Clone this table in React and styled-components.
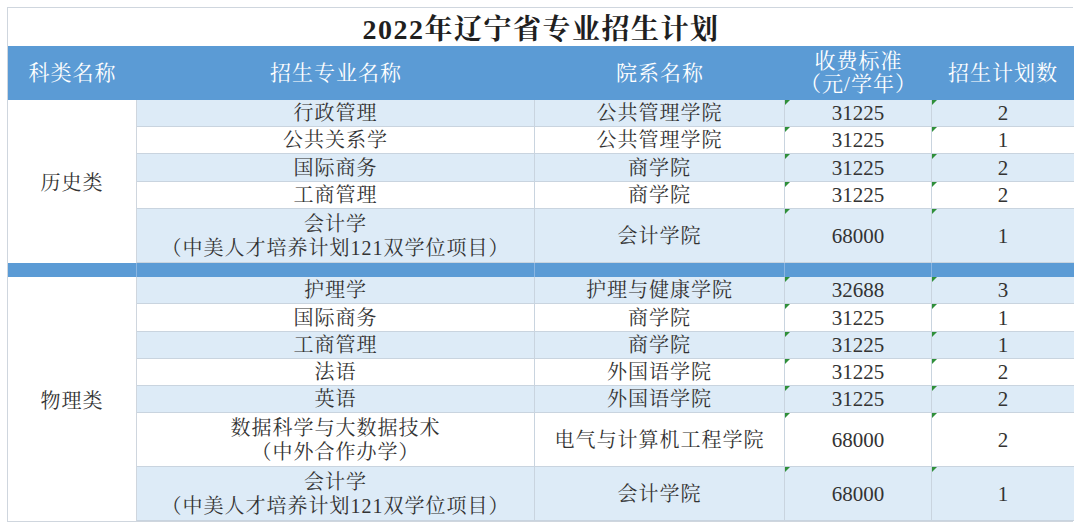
import React from "react";
import styled, { createGlobalStyle } from "styled-components";

const GlobalStyle = createGlobalStyle`
  html, body { margin: 0; padding: 0; background: #ffffff; }
  body { font-family: "Liberation Serif", "Noto Serif CJK SC", "Noto Sans CJK SC", serif; }
`;

const Page = styled.div`
  width: 1080px;
  height: 528px;
  padding: 7px;
  box-sizing: border-box;
`;

const Sheet = styled.div`
  display: grid;
  grid-template-columns: 129px 398px 250px 147px 142px;
  width: 1066px;
  border: 1px solid #cfd6de;
  box-sizing: border-box;
  color: #333333;
`;

const Title = styled.div`
  grid-column: 1 / -1;
  height: 38px;
  display: flex;
  align-items: center;
  justify-content: center;
  font-size: 28px;
  font-weight: 700;
  color: #1f1f1f;
  letter-spacing: 1.5px;
  background: #ffffff;
`;

const HeadCell = styled.div`
  height: 54px;
  background: #5b9bd5;
  color: #ffffff;
  display: flex;
  flex-direction: column;
  align-items: center;
  justify-content: center;
  font-size: 21px;
  line-height: 23px;
  letter-spacing: 1px;
`;

const CategoryCell = styled.div`
  grid-column: 1;
  grid-row: span ${(p) => p.$span};
  background: #ffffff;
  border-right: 1px solid #cfd6de;
  display: flex;
  align-items: center;
  justify-content: center;
  font-size: 20px;
  letter-spacing: 1px;
`;

const Cell = styled.div`
  position: relative;
  height: ${(p) => p.$h}px;
  box-sizing: border-box;
  background: ${(p) => (p.$shade ? "#ddebf7" : "#ffffff")};
  border-bottom: 1px solid #c9d4df;
  border-right: ${(p) => (p.$last ? "none" : "1px solid #c9d4df")};
  display: flex;
  flex-direction: column;
  align-items: center;
  justify-content: center;
  font-size: 20px;
  line-height: 24px;
  letter-spacing: 1px;
  white-space: nowrap;

  &::before {
    content: "";
    display: ${(p) => (p.$tick ? "block" : "none")};
    position: absolute;
    left: 0;
    top: 0;
    width: 0;
    height: 0;
    border-top: 5px solid #2f8f3a;
    border-right: 5px solid transparent;
  }
`;

const Number = styled.span`
  font-size: 21px;
  letter-spacing: 0;
`;

const Divider = styled.div`
  height: 14px;
  background: #5b9bd5;
  border-right: ${(p) => (p.$last ? "none" : "1px solid #8ab6e2")};
`;

const groups = [
  {
    name: "历史类",
    rows: [
      { h: 27, major: ["行政管理"], dept: "公共管理学院", fee: "31225", count: "2" },
      { h: 27, major: ["公共关系学"], dept: "公共管理学院", fee: "31225", count: "1" },
      { h: 28, major: ["国际商务"], dept: "商学院", fee: "31225", count: "2" },
      { h: 27, major: ["工商管理"], dept: "商学院", fee: "31225", count: "2" },
      { h: 54, major: ["会计学", "（中美人才培养计划121双学位项目）"], dept: "会计学院", fee: "68000", count: "1" },
    ],
  },
  {
    name: "物理类",
    rows: [
      { h: 27, major: ["护理学"], dept: "护理与健康学院", fee: "32688", count: "3" },
      { h: 28, major: ["国际商务"], dept: "商学院", fee: "31225", count: "1" },
      { h: 27, major: ["工商管理"], dept: "商学院", fee: "31225", count: "1" },
      { h: 27, major: ["法语"], dept: "外国语学院", fee: "31225", count: "2" },
      { h: 27, major: ["英语"], dept: "外国语学院", fee: "31225", count: "2" },
      { h: 54, major: ["数据科学与大数据技术", "（中外合作办学）"], dept: "电气与计算机工程学院", fee: "68000", count: "2" },
      { h: 54, major: ["会计学", "（中美人才培养计划121双学位项目）"], dept: "会计学院", fee: "68000", count: "1" },
    ],
  },
];

function Group({ group }) {
  return (
    <>
      <CategoryCell $span={group.rows.length}>{group.name}</CategoryCell>
      {group.rows.map((r, i) => {
        const shade = i % 2 === 0;
        return (
          <React.Fragment key={i}>
            <Cell $shade={shade} $h={r.h}>
              {r.major.map((line) => (
                <span key={line}>{line}</span>
              ))}
            </Cell>
            <Cell $shade={shade} $h={r.h}>{r.dept}</Cell>
            <Cell $shade={shade} $h={r.h} $tick>
              <Number>{r.fee}</Number>
            </Cell>
            <Cell $shade={shade} $h={r.h} $tick $last>
              <Number>{r.count}</Number>
            </Cell>
          </React.Fragment>
        );
      })}
    </>
  );
}

export default function App() {
  return (
    <Page>
      <GlobalStyle />
      <Sheet>
        <Title>2022年辽宁省专业招生计划</Title>
        <HeadCell>科类名称</HeadCell>
        <HeadCell>招生专业名称</HeadCell>
        <HeadCell>院系名称</HeadCell>
        <HeadCell>
          <span>收费标准</span>
          <span>（元/学年）</span>
        </HeadCell>
        <HeadCell>招生计划数</HeadCell>
        <Group group={groups[0]} />
        <Divider />
        <Divider />
        <Divider />
        <Divider />
        <Divider $last />
        <Group group={groups[1]} />
      </Sheet>
    </Page>
  );
}
